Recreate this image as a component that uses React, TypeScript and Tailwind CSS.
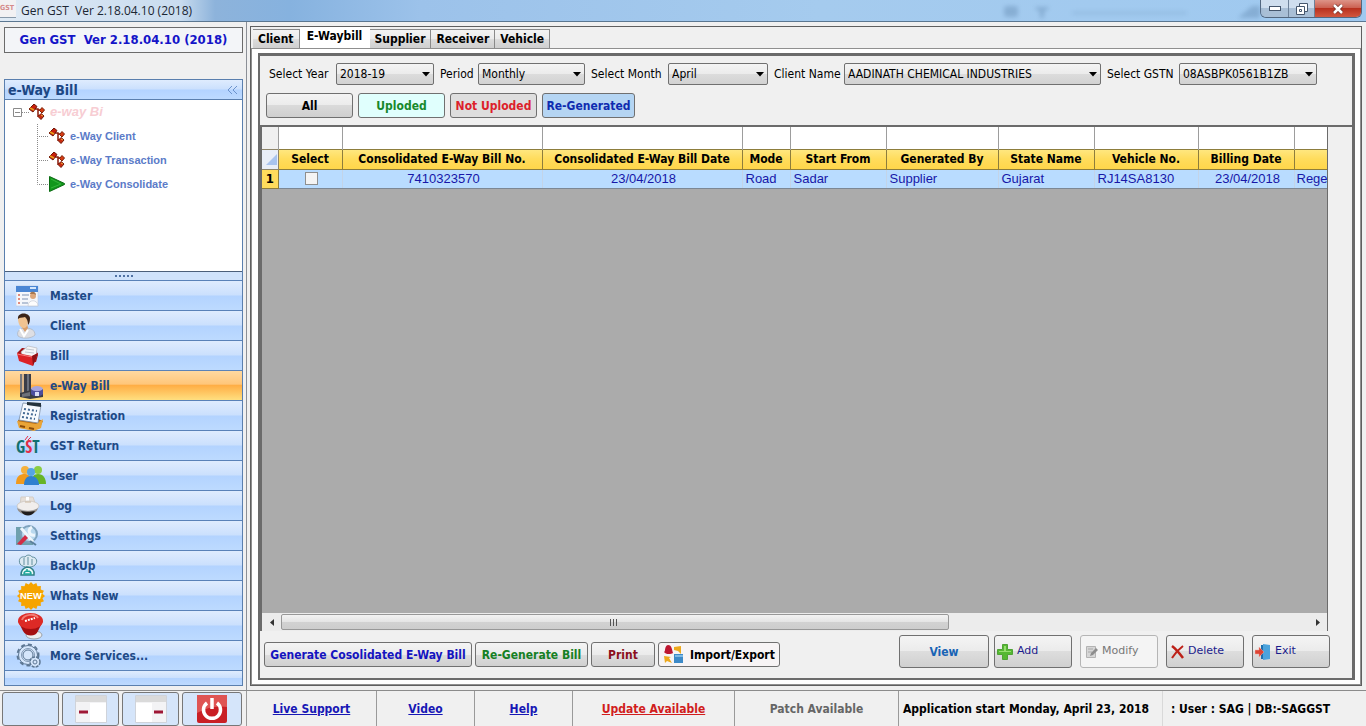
import type { ReactNode } from "react";

const tahoma = "font-['DejaVu_Sans_Condensed','DejaVu_Sans',sans-serif]";
const arial = "font-['Liberation_Sans',Arial,sans-serif]";

function NodeIcon() {
  return (
    <svg width="16" height="16" viewBox="0 0 16 16">
      <path d="M6 5H9V12H12M9 6H13" fill="none" stroke="#8a1a08" strokeWidth="1.500" />
      <path d="M5 0L8 2.500L4 8L0 5Z" fill="#c8200c" stroke="#6d1507" />
      <path d="M1 4L5 6" stroke="#e9a51d" strokeWidth="1.500" />
      <path d="M13 3.500L15.500 6L13 9L10.500 6.500Z" fill="#d63a12" stroke="#7a2106" />
      <path d="M12 9.500L15 12L12 15.500L9 12.500Z" fill="#c92a0e" stroke="#6d1507" />
      <path d="M12 11L14 12" stroke="#f0b040" />
    </svg>
  );
}

function PlayIcon() {
  return (
    <svg width="16" height="16" viewBox="0 0 16 16">
      <path d="M.5 .5L15.500 7.500V8.500L.5 15.500Z" fill="#12971c" stroke="#0a6b12" />
      <path d="M2 3L12 8L2 12" fill="none" stroke="#35b53b" />
    </svg>
  );
}

function MasterIcon() {
  return (
    <svg width="24" height="24" viewBox="0 0 24 24">
      <rect x="0" y="2" width="22" height="20" fill="#f5f7fb" stroke="#b8c6dc" strokeWidth=".6" />
      <rect x="0" y="2" width="22" height="6" fill="#4a86d4" />
      <path d="M14 4H20" stroke="#d4e6fb" strokeWidth="2" />
      <path d="M2 11H4M2 15H4M2 19H4" stroke="#e28b7d" strokeWidth="2" />
      <path d="M6 11H13M6 15H12M6 19H12" stroke="#a4b4cc" strokeWidth="1.500" />
      <circle cx="17" cy="12" r="3" fill="#dda77a" />
      <path d="M14 10C14 7 20 7 20 11L18 10Z" fill="#a87850" />
      <path d="M12 22C12 15 22 15 22 22Z" fill="#fdfdfd" stroke="#bdc3cf" strokeWidth=".6" />
    </svg>
  );
}

function ClientIcon() {
  return (
    <svg width="22" height="26" viewBox="0 0 22 26">
      <path d="M2 23C0 18 5 15 9 15C15 15 19 17 19 22C15 26 6 26 2 23Z" fill="#dddee3" stroke="#aeb3bc" strokeWidth=".7" />
      <path d="M5 13L9 19L12 15L11 11H5Z" fill="#d99f6c" />
      <path d="M2 5C2 12 5 15 8 15C11 15 12 11 12 7C11 2 4 1 2 5Z" fill="#f0c391" />
      <path d="M2 6C1-1 13-1 14 5C14 9 13 11 12 12C12 8 11 6 9 4C6 5 4 4 2 6Z" fill="#3b2418" />
      <path d="M4 16L8 23L12 17" fill="none" stroke="#fff" strokeWidth="2" />
    </svg>
  );
}

function BillIcon() {
  return (
    <svg width="24" height="24" viewBox="0 0 24 24">
      <path d="M1 9L6 4L20 5L22 11L20 18L4 17Z" fill="#a31417" />
      <path d="M5 8L12 2L21 4L20 13L7 12Z" fill="#f4f5f7" stroke="#b7b7bd" strokeWidth=".7" />
      <path d="M10 5L18 6M9 8L18 9" stroke="#c3c8d0" />
      <path d="M1 9L16 12L22 9L17 22L3 17Z" fill="#dc2227" />
      <path d="M16 12L22 9L17 22Z" fill="#8e1015" />
      <path d="M1 10L16 13" stroke="#f67b7a" />
    </svg>
  );
}

function EwayIcon() {
  return (
    <svg width="28" height="28" viewBox="0 0 28 28">
      <path d="M4 2H6V24H4Z" fill="#77797f" />
      <path d="M8 2H15V20H8Z" fill="#3b3e48" />
      <path d="M6 2H8V22H6Z" fill="#d9b58a" />
      <path d="M11 2H13V20H11Z" fill="#6c717d" />
      <path d="M4 21L15 18L27 21V25L14 27L4 25Z" fill="#3a3c44" />
      <path d="M6 22L14 20V24L6 25Z" fill="#6e7179" />
      <ellipse cx="21" cy="17" rx="6" ry="3" fill="#a7a5dc" />
      <path d="M15 17V22C17 25 25 25 27 22V17C24 20 18 20 15 17Z" fill="#4b4d9d" />
      <path d="M19 20H23V24H19Z" fill="#dadcf6" />
    </svg>
  );
}

function RegistrationIcon() {
  return (
    <svg width="28" height="30" viewBox="0 0 28 30">
      <path d="M2 19L17 16L27 20L23 28L4 27Z" fill="#b96b12" />
      <path d="M1 20L20 23L27 18L25 27L18 30L3 27Z" fill="#e9a437" />
      <path d="M7 2L25 4L22 22L3 19Z" fill="#f7fafd" stroke="#7a8da3" strokeWidth=".8" />
      <path d="M11 1L25 2V6L11 4Z" fill="#25333c" />
      <path d="M8 8L21 10M7 12L20 14M6 16L19 18" stroke="#466b94" strokeWidth="2" strokeDasharray="2 2" />
      <path d="M4 25L9 26M13 27L18 28" stroke="#8b4a08" strokeWidth="2" />
    </svg>
  );
}

function GstIcon() {
  return (
    <svg width="32" height="28" viewBox="0 0 32 28">
      <text x="0" y="21" fontSize="17" fontWeight="700" fill="#11706f" fontFamily="Open Sans Condensed, Roboto Condensed, Liberation Sans Narrow, Liberation Sans">
        G<tspan fill="#e12d49">S</tspan>T
      </text>
      <path d="M9 8L12 4M12 8L15 5" stroke="#e12d49" />
    </svg>
  );
}

function UserIcon() {
  return (
    <svg width="30" height="24" viewBox="0 0 30 24">
      <circle cx="9" cy="6" r="4" fill="#f5b13d" />
      <path d="M0 20C0 12 4 10 9 10C14 10 16 15 16 20Z" fill="#f19a1c" />
      <circle cx="22" cy="6" r="4" fill="#8ccd43" />
      <path d="M15 20C15 13 18 10 22 10C27 10 30 14 30 20Z" fill="#67b427" />
      <circle cx="15" cy="8" r="4" fill="#55a5e4" />
      <path d="M8 21C8 15 11 12 15 12C20 12 23 16 23 21Z" fill="#2f80cf" />
    </svg>
  );
}

function LogIcon() {
  return (
    <svg width="24" height="24" viewBox="0 0 24 24">
      <path d="M4 12L5 3H17L20 12Z" fill="#e6dfd8" stroke="#d5cdc4" />
      <path d="M10 3H13V8H10Z" fill="#fff" />
      <ellipse cx="12" cy="12" rx="11" ry="5" fill="#f1eeec" stroke="#c7c1bb" strokeWidth=".7" />
      <path d="M1 14C3 23 20 23 22 14C17 18 7 18 1 14Z" fill="#97918b" />
      <path d="M5 17C8 23 16 23 19 17C15 18 9 18 5 17Z" fill="#1f1d1c" />
      <path d="M9 8H15" stroke="#c9b59c" />
    </svg>
  );
}

function SettingsIcon() {
  return (
    <svg width="24" height="24" viewBox="0 0 24 24">
      <rect x="0" y="3" width="17" height="18" fill="#6fa0ae" />
      <circle cx="13" cy="10" r="8" fill="#b9d8ee" stroke="#7fa3be" strokeWidth="2" />
      <path d="M5 4L17 18M16 3C11 6 13 12 19 11" stroke="#eef6fc" strokeWidth="3" fill="none" />
      <path d="M1 20L9 11L12 14L5 21Z" fill="#d32c45" />
      <path d="M14 17L20 21" stroke="#5b7f9b" strokeWidth="2" />
    </svg>
  );
}

function BackupIcon() {
  return (
    <svg width="24" height="24" viewBox="-2 0 24 24" fill="none" stroke="#628f9f">
      <path d="M2 10C0 5 3 2 7 3C9 0 13 1 14 3C19 3 20 8 17 11C14 14 5 14 2 10Z" fill="#dceaf2" />
      <path d="M6 4V11M10 3V11M14 5V11" />
      <path d="M3 21C3 17 5 14 9 13C14 13 17 17 16 21Z" fill="#eaf9f7" stroke="#2f7f85" strokeWidth="1.500" />
      <path d="M6 20C6 16 13 16 13 20ZM9 15V18" stroke="#1ba59a" strokeWidth="1.500" />
    </svg>
  );
}

function NewIcon() {
  const points = Array.from({ length: 32 }, (_, i) => {
    const r = i % 2 ? 12.5 : 15;
    const a = (i * Math.PI) / 16;
    return `${15 + r * Math.cos(a)},${15 + r * Math.sin(a)}`;
  }).join(" ");
  return (
    <svg width="30" height="28" viewBox="0 0 30 30" className={arial}>
      <polygon points={points} fill="#f6a400" />
      <text x="15" y="18" textAnchor="middle" fontSize="10" fontWeight="700" fill="#fff">NEW</text>
    </svg>
  );
}

function HelpIcon() {
  return (
    <svg width="28" height="28" viewBox="0 0 28 28">
      <ellipse cx="18" cy="23" rx="8" ry="4" fill="#eceef1" stroke="#9aa0a8" />
      <path d="M2 9L7 19C10 25 20 25 22 19L27 9Z" fill="#a50f12" />
      <ellipse cx="14.500" cy="9" rx="12.500" ry="8" fill="#dd2a26" />
      <path d="M6 8C8 2 19 1 22 6" fill="none" stroke="#f27c73" strokeWidth="2" />
      <path d="M9 9L19 6" stroke="#fff" strokeWidth="2" strokeDasharray="2 1" />
    </svg>
  );
}

function MoreIcon() {
  return (
    <svg width="26" height="26" viewBox="0 0 26 26" fill="none" stroke="#5d7793">
      <circle cx="12" cy="12" r="10.500" strokeWidth="2" strokeDasharray="4 3" />
      <circle cx="12" cy="12" r="9.500" fill="#d5e6fb" />
      <circle cx="12" cy="12" r="5" />
      <circle cx="12" cy="12" r="6.500" strokeWidth=".7" />
      <circle cx="19" cy="19" r="5" fill="#d5e6fb" strokeWidth="1.500" strokeDasharray="3 1" />
      <circle cx="19" cy="19" r="2" />
    </svg>
  );
}

const menu: { label: string; icon: ReactNode; active?: boolean }[] = [
  { label: "Master", icon: <MasterIcon /> },
  { label: "Client", icon: <ClientIcon /> },
  { label: "Bill", icon: <BillIcon /> },
  { label: "e-Way Bill", icon: <EwayIcon />, active: true },
  { label: "Registration", icon: <RegistrationIcon /> },
  { label: "GST Return", icon: <GstIcon /> },
  { label: "User", icon: <UserIcon /> },
  { label: "Log", icon: <LogIcon /> },
  { label: "Settings", icon: <SettingsIcon /> },
  { label: "BackUp", icon: <BackupIcon /> },
  { label: "Whats New", icon: <NewIcon /> },
  { label: "Help", icon: <HelpIcon /> },
  { label: "More Services...", icon: <MoreIcon /> },
];

const blue = "bg-[linear-gradient(#dfecfe_0%,#cbe0fd_48%,#b3d3ff_52%,#bddaff_100%)]";
const orange = "bg-[linear-gradient(#ffd9a0_0%,#ffc67a_45%,#ffae45_50%,#ffdf80_100%)]";

function TitleBar() {
  return (
    <header className="flex h-[22px] shrink-0 items-start border-b border-[#5b7791] bg-[linear-gradient(90deg,#dfeaf5_0,#c9dcef_180px,#8db3db_215px,#86b2df_290px,#9cc2ea_420px,#a5cbee_60%,#9fc9f0_100%)]">
      <span className="flex h-[18px] w-4 items-center overflow-hidden border-b border-[#8899aa] bg-[#f2f1f3] text-[7px] font-bold text-[#d58a8a]">GST</span>
      <h1 className="flex-1 whitespace-pre pl-[5px] pt-[3px] font-['Open_Sans',sans-serif] text-xs leading-4 text-[#1c2733]">Gen GST  Ver 2.18.04.10 (2018)</h1>
      <svg width="260" height="20" fill="#5f86ad" className="shrink-0 opacity-40 blur-[2px]">
        <rect x="4" y="6" width="14" height="11" rx="3" />
        <path d="M34 7H50L44 12V18H40V12Z" />
        <rect x="72" y="11" width="115" height="4" opacity=".4" />
        <path d="M238 18L252 6H260V18Z" />
      </svg>
      <div className="mr-1 flex h-[18px] overflow-hidden rounded-b-md border border-t-0 border-[#53677f]">
        <button aria-label="Minimize" className="flex w-7 items-center justify-center border-r border-[#6d8199] bg-[linear-gradient(#cfdeee_50%,#a9bfd6_50%)]">
          <svg width="12" height="5"><rect x=".5" y=".5" width="11" height="4" fill="#fff" stroke="#45566c" /></svg>
        </button>
        <button aria-label="Restore" className="flex w-[26px] items-center justify-center border-r border-[#6d8199] bg-[linear-gradient(#cfdeee_50%,#a9bfd6_50%)]">
          <svg width="12" height="12" fill="#fff" stroke="#45566c"><path d="M3.500.5H11.500V8.500H3.500Z" /><path d="M.5 3.500H8.500V11.500H.5Z" /><path d="M3.500 6.500H5.500V8.500H3.500Z" /></svg>
        </button>
        <button aria-label="Close" className="flex w-[46px] items-center justify-center bg-[linear-gradient(#dd9488_0%,#cc6253_45%,#b8311f_50%,#d2583f_100%)]">
          <svg width="12" height="10"><path d="M2 1L10 9M10 1L2 9" stroke="#6f2c26" strokeWidth="4" /><path d="M2 1L10 9M10 1L2 9" stroke="#fff" strokeWidth="2.500" /></svg>
        </button>
      </div>
    </header>
  );
}

function TreeItem({ label, icon, last }: { label: string; icon: ReactNode; last?: boolean }) {
  return (
    <li className="flex h-6 items-center">
      <svg width="12" height="24" stroke="#8a8a8a" strokeDasharray="1 1">
        <path d={last ? "M.5 0V12.500H12" : "M.5 0V24M0 12.500H12"} fill="none" />
      </svg>
      {icon}
      <a href="#" className="pl-[5px] text-[#5b7bc8]">{label}</a>
    </li>
  );
}

function Sidebar() {
  return (
    <aside className="flex w-[247px] shrink-0 flex-col border-r border-[#8b8f96] pb-1 pl-1 pr-[3px] pt-[5px]">
      <div className="flex h-[26px] shrink-0 items-center justify-center whitespace-pre border border-[#6b6b6b] bg-[#f3f5f8] text-[13px] font-bold text-[#1414c8]">Gen GST  Ver 2.18.04.10 (2018)</div>
      <section className="mt-[26px] flex flex-1 flex-col border border-[#5a7fae]">
        <div className={`flex h-5 shrink-0 items-center justify-between border-b border-[#5a7fae] px-[3px] ${blue}`}>
          <h2 className="text-sm font-bold text-[#1d4784]">e-Way Bill</h2>
          <button aria-label="Collapse">
            <svg width="12" height="10" fill="none" stroke="#6c93cc"><path d="M5 1L1 5L5 9M10 1L6 5L10 9" /></svg>
          </button>
        </div>
        <div className={`h-[172px] shrink-0 border-b border-[#4b5f7a] bg-white pl-2 text-[11px] font-bold ${arial}`}>
          <div className="flex h-6 items-center">
            <svg width="9" height="9" fill="#fff" stroke="#8a8a8a"><path d="M.5.5H8.500V8.500H.5ZM2 4.500H7" /></svg>
            <svg width="7" height="9" stroke="#8a8a8a" strokeDasharray="1 1"><path d="M0 4.500H7" /></svg>
            <NodeIcon />
            <a href="#" className="pl-[5px] text-[13px] italic text-[#f7cdd3]">e-way Bi</a>
          </div>
          <ul className="pl-6">
            <TreeItem label="e-Way Client" icon={<NodeIcon />} />
            <TreeItem label="e-Way Transaction" icon={<NodeIcon />} />
            <TreeItem label="e-Way Consolidate" icon={<PlayIcon />} last />
          </ul>
        </div>
        <div className="flex h-2 shrink-0 items-center justify-center bg-[#cfe2fb]">
          <svg width="18" height="3" fill="#5072a4"><path d="M0 0H2V2H0ZM4 0H6V2H4ZM8 0H10V2H8ZM12 0H14V2H12ZM16 0H18V2H16Z" /></svg>
        </div>
        <nav>
          {menu.map((m) => (
            <a key={m.label} href="#" className={`flex h-[30px] items-center border-t border-[#5a82b8] text-xs font-bold text-[#1e4a86] ${m.active ? orange : blue}`}>
              <span className="flex w-[45px] pl-[11px]">{m.icon}</span>
              {m.label}
            </a>
          ))}
        </nav>
        <div className={`flex-1 border-t border-[#5a82b8] ${blue}`} />
      </section>
    </aside>
  );
}

function Field({ id, label, value, labelWidth, width }: { id: string; label: string; value: string; labelWidth: string; width: string }) {
  return (
    <div className="flex items-center gap-1">
      <label htmlFor={id} className={`whitespace-nowrap ${labelWidth}`}>{label}</label>
      <div className={`relative ${width}`}>
        <select id={id} className="block h-[22px] w-full appearance-none rounded-[2px] border border-[#707070] bg-[linear-gradient(#f4f4f4,#ebebeb_50%,#dcdcdc_50%,#d2d2d2)] pl-[3px] text-black">
          <option>{value}</option>
        </select>
        <svg className="pointer-events-none absolute right-1 top-[9px]" width="8" height="5"><path d="M0 0H8L4 4.500Z" /></svg>
      </div>
    </div>
  );
}

const tabs = ["Client", "E-Waybill", "Supplier", "Receiver", "Vehicle"];

const filters = [
  { label: "All", style: "w-[87px] text-black bg-[linear-gradient(#f4f4f4,#ebebeb_50%,#dadada_50%,#cfcfcf)]" },
  { label: "Uploded", style: "w-[87px] text-[#17892b] bg-[#e0fffd]" },
  { label: "Not Uploded", style: "w-[87px] text-[#dd1f2b] bg-[#dedede]" },
  { label: "Re-Generated", style: "w-[93px] text-[#0f2cb0] bg-[#b5d5f3]" },
];

const columns = [
  { title: "Select", width: "w-16", value: "", align: "text-center" },
  { title: "Consolidated E-Way Bill No.", width: "w-[200px]", value: "7410323570", align: "text-center" },
  { title: "Consolidated E-Way Bill Date", width: "w-[200px]", value: "23/04/2018", align: "text-center" },
  { title: "Mode", width: "w-12", value: "Road", align: "text-left" },
  { title: "Start From", width: "w-24", value: "Sadar", align: "text-left" },
  { title: "Generated By", width: "w-28", value: "Supplier", align: "text-left" },
  { title: "State Name", width: "w-24", value: "Gujarat", align: "text-left" },
  { title: "Vehicle No.", width: "w-[104px]", value: "RJ14SA8130", align: "text-left" },
  { title: "Billing Date", width: "w-24", value: "23/04/2018", align: "text-center" },
  { title: "", width: "", value: "Rege", align: "text-left" },
];

function Grid() {
  return (
    <div className="mr-[24px] flex min-w-0 flex-1 flex-col border-l-2 border-r border-[#6b6b6b]">
      <div className="flex-1 overflow-hidden bg-[#ababab]">
        <table className="w-full table-fixed border-collapse">
          <colgroup>
            <col className="w-4" />
            {columns.map((c, i) => <col key={i} className={c.width} />)}
          </colgroup>
          <thead>
            <tr className="h-[22px] bg-white">
              <td className="border-r border-[#9d9d9d] bg-[#f0f0f0]" />
              {columns.map((c, i) => <td key={i} className="border-r border-[#9d9d9d] last:border-r-0" />)}
            </tr>
            <tr className="h-5 bg-[linear-gradient(#ffe883,#ffdc5c_50%,#ffd64a)] text-xs leading-[18px]">
              <td className="border-y border-r border-[#8d8468] bg-[#e9eef7] p-0">
                <svg className="ml-auto" width="14" height="14"><path d="M13 2V13H2Z" fill="#a9c4ee" /></svg>
              </td>
              {columns.map((c, i) => (
                <th key={i} className="whitespace-nowrap border-y border-r border-[#8d7d3c] p-0 font-bold last:border-r-0">{c.title}</th>
              ))}
            </tr>
          </thead>
          <tbody>
            <tr className={`h-[19px] bg-[#b9dcff] text-[13px] leading-[18px] text-[#1717a8] ${arial}`}>
              <th className={`border-b border-r border-[#8d7d3c] bg-[#ffdc5c] p-0 text-[13px] text-black ${tahoma}`}>1</th>
              {columns.map((c, i) => (
                <td key={i} className={`whitespace-nowrap border-b border-r border-b-[#7c8794] border-r-[#c3d4e8] py-0 pl-[3px] last:border-r-0 last:pl-[2px] ${c.align}`}>
                  {i === 0 ? (
                    <input type="checkbox" aria-label="Select row 1" className="mx-auto block size-[13px] appearance-none border border-[#8e8f8f] bg-[#f4f4f4]" />
                  ) : c.value}
                </td>
              ))}
            </tr>
          </tbody>
        </table>
      </div>
      <div className="flex h-[18px] shrink-0 items-center bg-[#ececec] pt-px">
        <button aria-label="Scroll left" className="flex w-[19px] justify-center"><svg width="4" height="7"><path d="M4 0V7L0 3.500Z" fill="#333" /></svg></button>
        <div className="flex h-full flex-1">
          <div className="flex h-4 w-[65%] items-center justify-center rounded-[2px] border border-[#989898] bg-[linear-gradient(#f3f3f3,#e4e4e4_50%,#d2d2d2_50%,#cdcdcd)]">
            <svg width="9" height="7" stroke="#555"><path d="M.5 0V7M3.500 0V7M6.500 0V7" /></svg>
          </div>
        </div>
        <button aria-label="Scroll right" className="flex w-[19px] justify-center"><svg width="4" height="7"><path d="M0 0V7L4 3.500Z" fill="#333" /></svg></button>
      </div>
    </div>
  );
}

const face = "rounded-[3px] border border-[#707070] bg-[linear-gradient(#f4f4f4,#ebebeb_50%,#dddddd_50%,#d0d0d0)] whitespace-nowrap";

function ActionBar() {
  return (
    <div className="flex h-[47px] shrink-0 items-start pl-1 pr-[22px] pt-1 text-xs font-bold">
      <div className="flex gap-[3px] pt-[7px]">
        <button className={`h-[25px] w-[208px] text-[#1414c0] ${face}`}>Generate Cosolidated E-Way Bill</button>
        <button className={`h-[25px] w-[113px] text-[#168024] ${face}`}>Re-Generate Bill</button>
        <button className={`h-[25px] w-16 text-[#8b0f1c] ${face}`}>Print</button>
        <button className="flex h-[25px] w-[122px] items-center gap-1.5 whitespace-nowrap rounded-[3px] border border-[#707070] bg-[#f7f4f5] pl-1">
          <svg width="21" height="19">
            <path d="M5 0C9 0 9 5 10 8C7 10 2 9 1 7C3 6 1 1 5 0Z" fill="#bd1731" />
            <path d="M11 2L18 1V9L15 6L11 5Z" fill="#eda91c" />
            <path d="M1 11L8 12L6 13L9 18L4 16L2 18Z" fill="#eda91c" />
            <path d="M11 9H20V18H11Z" fill="#3d8ac8" /><path d="M12 10H20V12H12Z" fill="#7eb9e4" />
          </svg>
          Import/Export
        </button>
      </div>
      <div className="ml-auto flex font-normal text-[#1c1c8c]">
        <button className={`mr-[5px] h-[33px] w-[90px] font-bold text-[#1763b5] ${face}`}>View</button>
        <div className="flex gap-2 font-['DejaVu_Sans',sans-serif] text-[11px]">
          <button className={`flex h-[33px] w-[78px] items-center gap-1 pl-[2px] ${face}`}>
            <svg width="16" height="16"><path d="M5.500.5H10.500V5.500H15.500V10.500H10.500V15.500H5.500V10.500H.5V5.500H5.500Z" fill="#55b832" stroke="#4fa336" /><path d="M7 2H9V7H14V8H2V7H7Z" fill="#96df70" /></svg>
            Add
          </button>
          <button disabled className="flex h-[33px] w-[78px] items-center gap-1 whitespace-nowrap rounded-[3px] border border-[#b5b5b5] bg-[#f4f4f4] pl-[5px] text-[#777777]">
            <svg width="12" height="14"><path d="M.5 1.500H9.500V12.500H.5Z" fill="#d6d6d6" stroke="#b3b3b3" /><path d="M2 4H7M2 7H6" stroke="#aaa" /><path d="M4 11L5 8L10 3L12 5L7 10Z" fill="#8d8d8d" /></svg>
            Modify
          </button>
          <button className={`flex h-[33px] w-[78px] items-center gap-1 pl-1 ${face}`}>
            <svg width="13" height="14" fill="none" stroke="#bd2118"><path d="M1 1C5 4 9 9 12 13" strokeWidth="2.500" /><path d="M12 1C8 4 4 8 1 13" strokeWidth="2" /></svg>
            Delete
          </button>
          <button className={`flex h-[33px] w-[78px] items-center gap-1 pl-[2px] ${face}`}>
            <svg width="16" height="16"><path d="M6 1H14V15H6Z" fill="#1f6fae" /><path d="M8 0L15 1V15L8 16Z" fill="#4ba3dc" /><path d="M0 6H4V3L9 8L4 13V10H0Z" fill="#dd4434" stroke="#f2aaa0" strokeWidth=".5" /></svg>
            Exit
          </button>
        </div>
      </div>
    </div>
  );
}

function Main() {
  return (
    <main className="flex min-w-0 flex-1 flex-col pb-1 pl-[3px] pr-1 pt-1">
      <div className="flex flex-1 flex-col border border-[#5f5f5f]">
        <div role="tablist" className="flex h-[21px] shrink-0 items-end pl-[2px] text-xs font-bold leading-4">
          {tabs.map((t) => (
            <button
              key={t}
              role="tab"
              aria-selected={t === "E-Waybill"}
              className={
                t === "E-Waybill"
                  ? "h-[21px] w-[70px] bg-white px-1 pb-[3px]"
                  : "h-[19px] border border-l-0 border-b-0 border-[#8a8a8a] bg-[linear-gradient(#f3f3f3,#ebebeb_50%,#dddddd_50%,#cfcfcf)] px-[5px]"
              }
            >
              {t}
            </button>
          ))}
        </div>
        <div className="flex flex-1 flex-col border border-[#8f8f8f] bg-white py-1 pl-[6px] pr-[5px]">
          <div className="flex flex-1 flex-col border-[3px] border-[#6b6b6b] border-l-2 border-b-2 bg-[#f0f0f0]">
            <div className="h-[71px] shrink-0 border-b-2 border-[#6b6b6b] pl-[6px] pt-[7px] text-xs">
              <div className="flex gap-[6px] pl-[3px]">
                <Field id="year" label="Select Year" value="2018-19" labelWidth="w-[63px]" width="w-[98px]" />
                <Field id="period" label="Period" value="Monthly" labelWidth="w-[34px]" width="w-[107px]" />
                <Field id="month" label="Select Month" value="April" labelWidth="w-[73px]" width="w-[100px]" />
                <Field id="client" label="Client Name" value="AADINATH CHEMICAL INDUSTRIES" labelWidth="w-[66px]" width="w-[257px]" />
                <Field id="gstn" label="Select GSTN" value="08ASBPK0561B1ZB" labelWidth="w-[68px]" width="w-[138px]" />
              </div>
              <div className="mt-2 flex gap-[5px] font-bold">
                {filters.map((f) => (
                  <button key={f.label} className={`h-[25px] whitespace-nowrap rounded-[3px] border border-[#707070] ${f.style}`}>{f.label}</button>
                ))}
              </div>
            </div>
            <Grid />
            <ActionBar />
          </div>
        </div>
      </div>
    </main>
  );
}

function StatusBar() {
  return (
    <footer className="flex h-9 shrink-0 overflow-hidden border-t border-[#8b8b8b] bg-[#f0f0f0] text-xs font-bold">
      <div className="flex w-[247px] shrink-0 gap-[3px] border-r border-[#9a9a9a] pl-[2px] pt-px">
        <button aria-label="Blank" className="w-[57px] rounded-[3px] border border-[#777] bg-[#d5e5fa]" />
        <button aria-label="Hide left panel" className="flex w-[57px] items-center justify-center rounded-[3px] border border-[#777] bg-[#d5e5fa]">
          <svg width="32" height="28"><path d="M.5.5H31.500V27.500H.5Z" fill="#f3f3f5" stroke="#cfd3da" /><path d="M1 1H31V7H1Z" fill="#dadada" /><path d="M15 8H31V27H15Z" fill="#fff" /><path d="M4 17H13" stroke="#9e1735" strokeWidth="3" /></svg>
        </button>
        <button aria-label="Hide right panel" className="flex w-[57px] items-center justify-center rounded-[3px] border border-[#777] bg-[#d5e5fa]">
          <svg width="32" height="28"><path d="M.5.5H31.500V27.500H.5Z" fill="#f3f3f5" stroke="#cfd3da" /><path d="M1 1H31V7H1Z" fill="#dadada" /><path d="M1 8H17V27H1Z" fill="#fff" /><path d="M19 17H28" stroke="#9e1735" strokeWidth="3" /></svg>
        </button>
        <button aria-label="Power" className="flex w-[60px] items-center justify-center rounded-[3px] border border-[#777] bg-[#d5e5fa]">
          <svg width="30" height="28"><rect width="30" height="28" rx="2" fill="#c91f25" /><path d="M0 0H30V12Q15 10 0 18Z" fill="#df5453" /><path d="M10 8A8.500 8.500 0 1 0 20 8" fill="none" stroke="#fff" strokeWidth="3.500" /><path d="M15 3V14" stroke="#fff" strokeWidth="3.500" /></svg>
        </button>
      </div>
      <div className="flex min-w-0 flex-1 items-center whitespace-nowrap leading-[36px]">
        <div className="h-full w-[130px] shrink-0 border-r border-[#9a9a9a] text-center"><a href="#" className="text-[#1717b5] underline">Live Support</a></div>
        <div className="h-full w-[98px] shrink-0 border-r border-[#9a9a9a] text-center"><a href="#" className="text-[#1717b5] underline">Video</a></div>
        <div className="h-full w-[98px] shrink-0 border-r border-[#9a9a9a] text-center"><a href="#" className="text-[#1717b5] underline">Help</a></div>
        <div className="h-full w-[162px] shrink-0 border-r border-[#9a9a9a] text-center"><a href="#" className="text-[#d11d1d] underline">Update Available</a></div>
        <div className="h-full w-[164px] shrink-0 border-r border-[#9a9a9a] text-center text-[#666]">Patch Available</div>
        <div className="h-full w-[106px] shrink-0 overflow-hidden pl-1">Application start</div>
        <div className="h-full w-[158px] shrink-0 border-r border-[#d9d9d9] pl-1">Monday, April 23, 2018</div>
        <div className="h-full pl-2">: User : SAG | DB:-SAGGST</div>
      </div>
    </footer>
  );
}

export default function App() {
  return (
    <div className={`flex min-h-screen flex-col bg-[#f0f0f0] text-black ${tahoma}`}>
      <TitleBar />
      <div className="flex flex-1">
        <Sidebar />
        <Main />
      </div>
      <StatusBar />
    </div>
  );
}
